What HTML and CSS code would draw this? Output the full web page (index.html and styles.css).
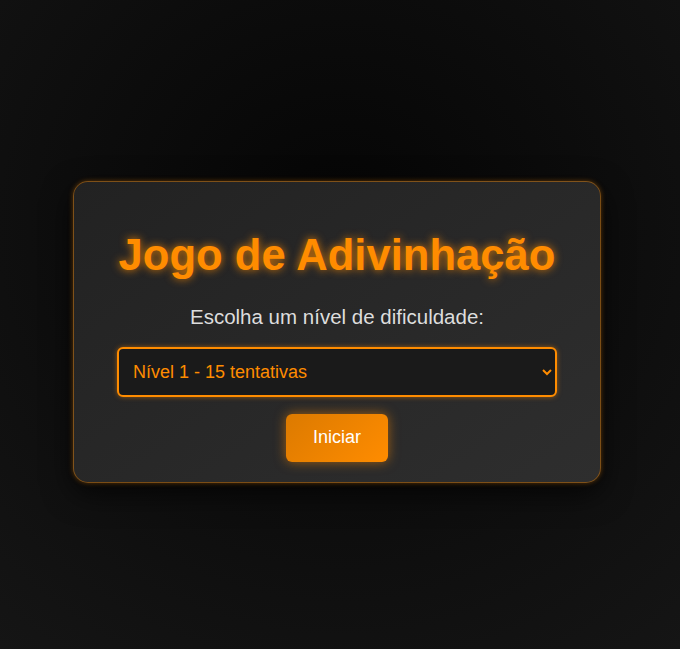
FILE: index.html
```html
<!DOCTYPE html>
<html lang="pt-BR">
<head>
<meta charset="UTF-8">
<title>Jogo de Adivinhação</title>
<link rel="stylesheet" href="styles.css">
</head>
<body>
  <div class="card">
    <h1 class="title">Jogo de Adivinhação</h1>
    <p class="subtitle">Escolha um nível de dificuldade:</p>
    <select class="level">
      <option>Nível 1 - 15 tentativas</option>
      <option>Nível 2 - 10 tentativas</option>
      <option>Nível 3 - 5 tentativas</option>
    </select>
    <button class="start">Iniciar</button>
  </div>
</body>
</html>
```

FILE: styles.css
```css
html, body {
  height: 100%;
}
body {
  margin: 0;
  box-sizing: border-box;
  min-height: 100vh;
  padding: 14px 6px 0 0;
  display: flex;
  justify-content: center;
  align-items: center;
  font-family: "Liberation Sans", Arial, sans-serif;
  background: radial-gradient(circle at 50% 35%, #050505 0%, #0c0c0c 45%, #151515 100%);
  background-color: #101010;
}
.card {
  width: 528px;
  box-sizing: border-box;
  padding: 20px 43px;
  border-radius: 15px;
  border: 1px solid rgba(255, 140, 0, 0.4);
  background: linear-gradient(145deg, #222222, #2e2e2e);
  box-shadow: 0 0 5px rgba(255, 140, 0, 0.35), 0 10px 30px rgba(0, 0, 0, 0.7);
  display: flex;
  flex-direction: column;
  align-items: center;
}
.title {
  margin: 29px 0 25px;
  font-size: 43.6px;
  font-weight: bold;
  white-space: nowrap;
  color: #ff8c00;
  text-shadow: 0 0 8px rgba(255, 140, 0, 0.85);
  line-height: normal;
}
.subtitle {
  margin: 0 0 18px;
  font-size: 20.5px;
  color: #dddddd;
}
.level {
  width: 100%;
  box-sizing: border-box;
  padding: 12px 11px 12px 10px;
  font-family: "Liberation Sans", Arial, sans-serif;
  font-size: 18px;
  color: #ff8c00;
  background: #1a1a1a;
  border: 2px solid #ff8c00;
  border-radius: 6px;
  box-shadow: 0 0 5px rgba(255, 140, 0, 0.5);
  outline: none;
  margin: 0 0 17px;
}
.start {
  padding: 13.5px 27px;
  font-family: "Liberation Sans", Arial, sans-serif;
  font-size: 18px;
  color: #ffffff;
  border: none;
  border-radius: 6px;
  background: linear-gradient(135deg, #dc7a00, #ff8c00);
  box-shadow: 0 0 12px rgba(255, 140, 0, 0.55);
  cursor: pointer;
}
```
